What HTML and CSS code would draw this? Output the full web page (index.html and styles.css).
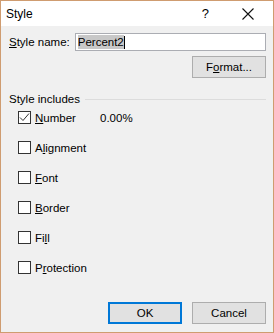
FILE: index.html
```html
<!DOCTYPE html>
<html lang="en">
<head>
    <meta charset="UTF-8">
    <title>Style</title>
    <link rel="stylesheet" href="styles.css">
</head>
<body>
    <div class="dialog">
        <div class="titlebar">
            <span class="title">Style</span>
            <span class="help">?</span>
            <svg class="close" width="12" height="12" viewBox="0 0 12 12">
                <path d="M0.5 0.5 L11.5 11.5 M11.5 0.5 L0.5 11.5" stroke="#111" stroke-width="1.1" fill="none"/>
            </svg>
        </div>

        <div class="content">
            <div class="name-row">
                <label class="name-label"><u>S</u>tyle name:</label>
                <div class="textbox"><span class="selected">Percent2</span><span class="caret"></span></div>
            </div>

            <div class="format-row">
                <button class="btn">F<u>o</u>rmat...</button>
            </div>

            <div class="group-title">
                <span>Style includes</span>
                <div class="rule"></div>
            </div>

            <div class="options">
                <div class="option">
                    <span class="box">
                        <svg width="11" height="11" viewBox="0 0 11 11">
                            <path d="M1 5.5 L4 8.5 L10 1.5" stroke="#333" stroke-width="1" fill="none"/>
                        </svg>
                    </span>
                    <span class="opt-label"><u>N</u>umber</span>
                    <span class="opt-value">0.00%</span>
                </div>
                <div class="option"><span class="box"></span><span class="opt-label">A<u>l</u>ignment</span></div>
                <div class="option"><span class="box"></span><span class="opt-label"><u>F</u>ont</span></div>
                <div class="option"><span class="box"></span><span class="opt-label"><u>B</u>order</span></div>
                <div class="option"><span class="box"></span><span class="opt-label">Fi<u>l</u>l</span></div>
                <div class="option"><span class="box"></span><span class="opt-label">P<u>r</u>otection</span></div>
            </div>

            <div class="buttons">
                <button class="btn default">OK</button>
                <button class="btn">Cancel</button>
            </div>
        </div>
    </div>
</body>
</html>
```

FILE: styles.css
```css
body {
    margin: 0;
    font-family: "Liberation Sans", Arial, sans-serif;
    font-size: 11.5px;
    color: #000;
}

.dialog {
    box-sizing: border-box;
    width: 274px;
    height: 333px;
    border: 1px solid #cf9c70;
    background-color: #f0f0f0;
    display: flex;
    flex-direction: column;
}

.titlebar {
    height: 25px;
    background-color: #fff;
    display: flex;
    align-items: center;
    padding-left: 5px;
}

.title {
    flex: 1;
    font-size: 12px;
}

.help {
    font-size: 13px;
    margin-right: 33px;
}

.close {
    margin-right: 19px;
}

.content {
    flex: 1;
    display: flex;
    flex-direction: column;
    padding: 7px 7px 8px 8px;
}

.name-row {
    display: flex;
    align-items: center;
}

.name-label {
    width: 66px;
}

.textbox {
    box-sizing: border-box;
    width: 192px;
    height: 18px;
    border: 1px solid #abadb3;
    background-color: #fff;
    display: flex;
    align-items: center;
    padding-left: 2px;
}

.selected {
    background-color: #c8c8c8;
    line-height: 14px;
}

.caret {
    width: 1px;
    height: 13px;
    background-color: #000;
}

.format-row {
    display: flex;
    justify-content: flex-end;
    margin-top: 5px;
}

.btn {
    box-sizing: border-box;
    width: 74px;
    height: 22px;
    border: 1px solid #adadad;
    background-color: #e1e1e1;
    font-family: inherit;
    font-size: 11.5px;
    color: #000;
    padding: 0;
}

.btn.default {
    border: 2px solid #0078d7;
}

.group-title {
    display: flex;
    align-items: center;
    margin-top: 14px;
    height: 14px;
}

.rule {
    flex: 1;
    height: 1px;
    background-color: #dcdcdc;
    margin-left: 5px;
}

.options {
    margin-top: 5px;
    padding-left: 9px;
}

.option {
    display: flex;
    align-items: center;
    height: 13px;
    margin-bottom: 17px;
}

.box {
    box-sizing: border-box;
    width: 13px;
    height: 13px;
    border: 1px solid #333;
    background-color: #fff;
    display: flex;
    align-items: center;
    justify-content: center;
    margin-right: 4px;
}

.opt-label {
    width: 65px;
}

.buttons {
    display: flex;
    justify-content: flex-end;
    gap: 10px;
    margin-top: auto;
}
```
